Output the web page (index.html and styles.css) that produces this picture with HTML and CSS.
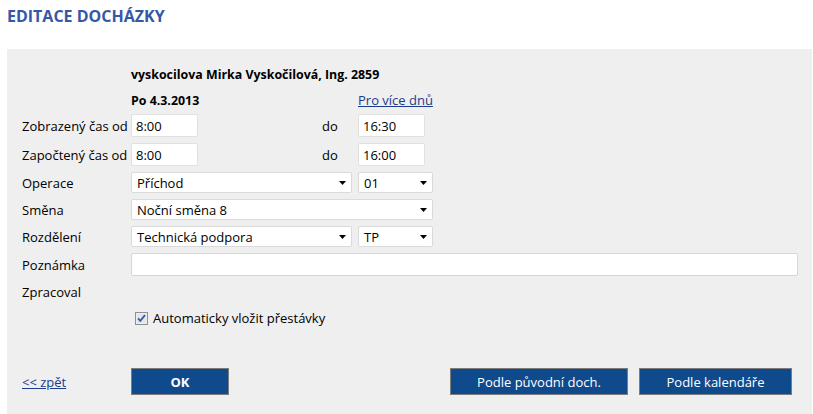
FILE: index.html
```html
<!DOCTYPE html>
<html lang="cs">
<head>
<meta charset="utf-8">
<title>Editace docházky</title>
<link rel="stylesheet" href="styles.css">
</head>
<body>
<h1 class="title">EDITACE DOCHÁZKY</h1>
<div class="panel">
  <div class="row row-name">
    <span class="label"></span>
    <strong>vyskocilova Mirka Vyskočilová, Ing. 2859</strong>
  </div>
  <div class="row row-date">
    <span class="label"></span>
    <strong class="datecell">Po 4.3.2013</strong>
    <a href="#" class="link">Pro více dnů</a>
  </div>
  <div class="row row-input">
    <span class="label">Zobrazený čas od</span>
    <input class="time" type="text" value="8:00">
    <span class="do">do</span>
    <input class="time" type="text" value="16:30">
  </div>
  <div class="row row-input">
    <span class="label">Započtený čas od</span>
    <input class="time" type="text" value="8:00">
    <span class="do">do</span>
    <input class="time" type="text" value="16:00">
  </div>
  <div class="row row-select">
    <span class="label">Operace</span>
    <div class="sel sel-main"><span class="sel-text">Příchod</span><svg class="arrow" width="7" height="4" viewBox="0 0 7 4"><path d="M0 0H7L3.5 4Z"/></svg></div>
    <div class="sel sel-small"><span class="sel-text">01</span><svg class="arrow" width="7" height="4" viewBox="0 0 7 4"><path d="M0 0H7L3.5 4Z"/></svg></div>
  </div>
  <div class="row row-select">
    <span class="label">Směna</span>
    <div class="sel sel-wide"><span class="sel-text">Noční směna 8</span><svg class="arrow" width="7" height="4" viewBox="0 0 7 4"><path d="M0 0H7L3.5 4Z"/></svg></div>
  </div>
  <div class="row row-select">
    <span class="label">Rozdělení</span>
    <div class="sel sel-main"><span class="sel-text">Technická podpora</span><svg class="arrow" width="7" height="4" viewBox="0 0 7 4"><path d="M0 0H7L3.5 4Z"/></svg></div>
    <div class="sel sel-small"><span class="sel-text">TP</span><svg class="arrow" width="7" height="4" viewBox="0 0 7 4"><path d="M0 0H7L3.5 4Z"/></svg></div>
  </div>
  <div class="row row-note">
    <span class="label">Poznámka</span>
    <input class="note" type="text" value="">
  </div>
  <div class="row row-proc">
    <span class="label">Zpracoval</span>
  </div>
  <div class="row row-check">
    <span class="label"></span>
    <svg class="check" width="13" height="13" viewBox="0 0 13 13"><rect x="0.5" y="0.5" width="12" height="12" fill="#f4f4f4" stroke="#8e8f8f"/><rect x="1.5" y="1.5" width="10" height="10" fill="#e3e6eb"/><path d="M3 6.3L5.3 8.8L10 3.2" fill="none" stroke="#3a58a8" stroke-width="1.8"/></svg>
    <span class="check-label">Automaticky vložit přestávky</span>
  </div>
  <div class="row row-buttons">
    <a href="#" class="link back">&lt;&lt; zpět</a>
    <button class="btn btn-ok">OK</button>
    <span class="spacer"></span>
    <button class="btn btn-orig">Podle původní doch.</button>
    <button class="btn btn-cal">Podle kalendáře</button>
  </div>
</div>
</body>
</html>
```
FILE: styles.css
```css
* { box-sizing: border-box; }
html, body { margin: 0; padding: 0; background: #fff; }
body {
  font-family: "Open Sans", "Noto Sans", "DejaVu Sans", sans-serif;
  font-size: 13px;
  color: #000;
  padding: 0 1px 0 7px;
}
.title {
  margin: 0;
  padding-top: 4px;
  height: 49px;
  font-size: 16px;
  font-weight: 700;
  color: #3558a6;
  line-height: 24px;
}
.panel {
  background: #efefef;
  padding: 13px 0 30px 15px;
  min-height: 380px;
}
.row {
  display: flex;
  align-items: center;
}
.label {
  width: 109px;
  flex: none;
}
strong { font-size: 12.4px; font-weight: 700; }
.row-name { height: 24px; }
.row-date { height: 28px; }
.datecell { width: 227px; flex: none; }
.link { color: #1d3c8c; text-decoration: underline; }
.row-input { height: 23px; margin-bottom: 6px; }
.time {
  width: 67px;
  height: 23px;
  border: 1px solid #e0e0e0;
  border-radius: 2px;
  background: #fff;
  font: inherit;
  padding: 0 0 0 4px;
  color: #000;
  flex: none;
}
.do { width: 36px; margin-left: 124px; flex: none; }
.row-select { height: 21px; margin-bottom: 6px; }
.sel {
  display: flex;
  align-items: center;
  height: 21px;
  background: #fff;
  border: 1px solid #dadada;
  border-radius: 2px;
  padding: 0 5px 0 5px;
  flex: none;
}
.sel-text { flex: 1; }
.sel-main { width: 221px; margin-right: 6px; }
.sel-small { width: 75px; }
.sel-wide { width: 302px; }
.arrow { fill: #000; flex: none; }
.row-note { height: 23px; }
.note {
  width: 667px;
  height: 23px;
  border: 1px solid #d6d6d6;
  border-radius: 2px;
  background: #fff;
  font: inherit;
  flex: none;
}
.row-proc { height: 31px; }
.row-check { height: 22px; }
.check { margin-left: 4px; margin-right: 5px; flex: none; }
.row-buttons { margin-top: 39px; height: 27px; }
.back { width: 109px; flex: none; }
.btn {
  height: 27px;
  background: #0f4a8d;
  border: 1px solid #7c7c7c;
  color: #fff;
  font: inherit;
  padding: 0;
  flex: none;
}
.btn-ok { width: 98px; font-weight: 700; }
.spacer { width: 221px; flex: none; }
.btn-orig { width: 178px; margin-right: 11px; }
.btn-cal { width: 153px; }
```
